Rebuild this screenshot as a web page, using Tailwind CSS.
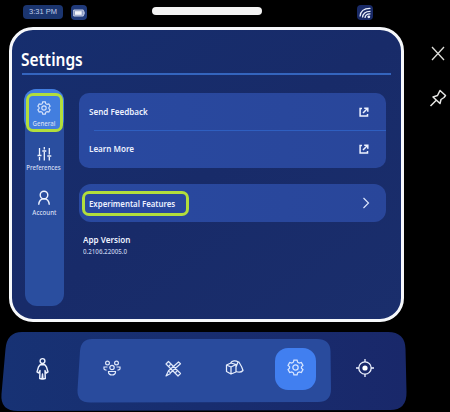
<!DOCTYPE html>
<html lang="en">
<head>
<meta charset="utf-8">
<title>Settings</title>
<script src="https://cdn.jsdelivr.net/npm/@tailwindcss/browser@4"></script>
</head>
<body class="w-[450px] h-[412px] overflow-hidden bg-black text-[#edf2ff] font-['Noto_Sans','Open_Sans',sans-serif]">
<svg class="hidden">
  <symbol id="gear" viewBox="0 0 16 16"><path d="M6.500 1h3l.5 2 1.500.9 2-.6L15 6l-1.400 1.300v1.400L15 10l-1.500 2.700-2-.6-1.500.9-.5 2h-3L6 13l-1.500-.9-2 .6L1 10l1.400-1.300V7.300L1 6l1.500-2.700 2 .6L6 3z"/><circle cx="8" cy="8" r="2.500"/></symbol>
  <symbol id="share" viewBox="0 0 10 10"><path d="M3 1.500H1.100v7.400h7.400V7M4 6l4.200-4.200M5.200 1.200h3.600v3.600"/></symbol>
</svg>
<header class="flex h-[27px]">
  <div class="ml-[23px] mt-[5px] w-10 h-[14px] rounded-[4px] bg-[#1b356f] text-[#c0cdea] text-[7.5px] leading-[14px] text-center font-medium font-['Liberation_Sans',sans-serif]">3:31 PM</div>
  <div class="ml-2 mt-[5px] w-4 h-[15px] rounded-[4px] bg-[#203a7a] flex items-center justify-center">
    <svg width="12" height="8" viewBox="0 0 12 8"><path d="M.7 1h9.600v6H.7z" fill="#8292bd" stroke="#c4cde5"/><path d="M2 2.200h6.700v3.600H2z" fill="#f2f4fb"/><path d="M11.200 2.500v3" stroke="#c4cde5"/></svg>
  </div>
  <div class="ml-[65px] mt-[7px] w-[110px] h-2 rounded-[4px] bg-[#f3f3f3]"></div>
  <div class="ml-[95px] mt-[5px] w-4 h-[15px] rounded-[4px] bg-[#192a67] flex items-center justify-center">
    <svg width="13" height="12" viewBox="0 0 13 12" fill="none" stroke="#e9eefa" stroke-width="1.250"><path d="M1 9.500C1.500 4.500 5 1.300 11.500 1.500M3.500 10.500c.3-4 3-6.300 8-6.200M6 11c.2-2.500 2-4.100 5.500-4"/><circle cx="9.800" cy="9.800" r=".8" fill="#e9eefa"/></svg>
  </div>
</header>

<main class="flex h-[305px]">
  <section class="ml-[9px] w-[395px] h-[295px] rounded-[24px] border-3 border-[#f6f8fb] bg-linear-to-br from-[#162e6e] via-[#182b69] to-[#1a2e6c] flex flex-col">
    <div class="ml-[10px] mr-[10px] h-[45px] pt-[17px] border-b-2 border-[#3465be]">
      <h1 class="-ml-px text-[17.500px] leading-[25px] font-semibold text-white origin-left scale-x-[0.885]">Settings</h1>
    </div>
    <div class="flex pt-[14px] pl-[12.500px]">
      <nav class="w-[39px] h-[217px] rounded-[12px] bg-[#2a4e9f] flex flex-col text-[6.900px] font-medium text-[#d5def3]">
        <div class="h-[42px] -mx-[0.5px] rounded-[12px] bg-[#427edf] pt-[4px]">
          <div class="mx-[1.500px] h-[39px] rounded-[7px] border-3 border-[#b2de3c] flex flex-col items-center pt-[5px]">
            <svg width="14" height="14" fill="none" stroke="#d7e3fb" stroke-width="1.300"><use href="#gear"/></svg>
            <span class="mt-[4px] leading-[9px] scale-x-[0.88]">General</span>
          </div>
        </div>
        <div class="mt-[16px] flex flex-col items-center">
          <svg width="15" height="14" viewBox="0 0 15 14" fill="none" stroke="#eff4ff" stroke-width="1.300"><path d="M2.500 1v7M2.500 10v3.500M.5 8.500h4M7.300 0v2.500M7.300 5v8.500M5.300 4h4M12.300 1v6.500M12.300 10v3.500M10.300 9h4"/></svg>
          <span class="mt-[2px] leading-[9px] whitespace-nowrap scale-x-[0.88]">Preferences</span>
        </div>
        <div class="mt-[18px] flex flex-col items-center">
          <svg width="14" height="16" viewBox="0 0 14 16" fill="none" stroke="#eff4ff" stroke-width="1.400"><circle cx="7" cy="5" r="3.800"/><path d="M1.700 14.800C2 11 3.500 8.700 7 8.700s5 2.300 5.300 6.100"/></svg>
          <span class="mt-[2px] leading-[9px] scale-x-[0.9]">Account</span>
        </div>
      </nav>
      <div class="ml-[15.500px] mt-[4px] w-[307px] flex flex-col">
        <div class="h-[75px] rounded-[10px] bg-linear-to-r from-[#2949a0] to-[#29469a] text-[9px] font-semibold">
          <div class="h-[37px] flex items-center justify-between pl-[9.500px] pr-[17px]"><span class="origin-left scale-x-[0.895] pt-px">Send Feedback</span><svg width="10" height="10" fill="none" stroke="#edf2ff" stroke-width="1.500"><use href="#share"/></svg></div>
          <div class="ml-[15px] h-px bg-[#2f5fc0]"></div>
          <div class="h-[35px] flex items-center justify-between pl-[9.500px] pr-[17px]"><span class="origin-left scale-x-[0.895] pt-px">Learn More</span><svg width="10" height="10" fill="none" stroke="#edf2ff" stroke-width="1.500"><use href="#share"/></svg></div>
        </div>
        <div class="mt-4 h-[38px] rounded-[12px] bg-linear-to-r from-[#2949a0] to-[#29469a] flex items-center justify-between pl-[3px] pr-[16px] text-[9px] font-semibold">
          <div class="w-[107px] h-[25px] rounded-[7px] border-3 border-[#b2de3c] flex items-center pl-[4px] whitespace-nowrap"><span class="origin-left scale-x-[0.87] pt-px">Experimental Features</span></div>
          <svg width="8" height="12" viewBox="0 0 8 12" fill="none" stroke="#dbe5fc" stroke-width="1.200"><path d="m1.500 1 5 5-5 5"/></svg>
        </div>
        <div class="mt-[12px] ml-1 text-[9px] leading-[12px] font-semibold origin-left scale-x-[0.9]">App Version</div>
        <div class="ml-1 mt-px text-[6.900px] leading-[10px] font-medium text-[#c3cee9] origin-left scale-x-[0.9]">0.2106.22005.0</div>
      </div>
    </div>
  </section>
  <aside class="ml-[24px] pt-[18px] w-5 flex flex-col items-center">
    <svg width="16" height="16" viewBox="0 0 16 16" fill="none" stroke="#deded9" stroke-width="1.300"><path d="m2 2 12 13M14 2 2 15"/></svg>
    <svg class="mt-[28px]" width="18" height="18" viewBox="0 0 18 18" fill="none" stroke="#e7e7e5" stroke-width="1.500" stroke-linejoin="round"><path d="m11 1.500 5.500 5-1.500 2-3 2-1 4-7-6.500 4.500-1.500zM7 11.500 1.500 17"/></svg>
  </aside>
</main>

<footer class="relative h-[80px] w-[450px]">
  <svg class="absolute inset-0" width="450" height="80">
    <defs><linearGradient id="dock"><stop stop-color="#173274"/><stop offset="1" stop-color="#19286a"/></linearGradient></defs>
    <path d="M22 0H388Q405 0 405.500 17L406.500 60Q407 78 390 78L18 79Q0 79 1.500 62L5.500 17Q7 0 22 0Z" fill="url(#dock)"/>
    <path d="M92 7H317Q330 7 330.500 19L331 57Q331 70 318 70L90 70.500Q77 70.500 77.500 58L80 19Q81 7 92 7Z" fill="#294b9d"/>
  </svg>
  <div class="relative flex h-[73px] items-center pl-[34px]">
    <svg width="16" height="24" viewBox="0 0 16 24" fill="none" stroke="#eef3ff" stroke-width="1.400" stroke-linejoin="round"><circle cx="8.500" cy="4" r="2.400"/><path d="M6.200 7.800h4.600l1.700 2.200 1.500 5-1.500 1-1.500-2.500.3 8-2.300.5-.5-5-.5 5-2.300-.5.3-8L4.500 16 3 15l1.500-5z"/></svg>
    <svg class="ml-[53px] -mt-[2px]" width="18" height="18" viewBox="0 0 18 18" fill="none" stroke="#dfe8fa" stroke-width="1.200"><circle cx="4.500" cy="4" r="1.900"/><circle cx="13.500" cy="4" r="1.900"/><circle cx="9" cy="8.500" r="2.200"/><path d="M4.500 8H1v2q.5 1 2.500 1.200M13.500 8H17v2q-.5 1-2.500 1.200M5.500 12.500h7c.3 2-1.200 3.500-3.500 3.500s-3.800-1.500-3.500-3.500z"/></svg>
    <svg class="ml-[44px] -mt-px" width="17" height="17" viewBox="0 0 17 17" fill="none" stroke="#dfe8fa" stroke-width="1.200" stroke-linejoin="round"><path d="m3.500 1.500 12 12-2.500 2.500-12-12zM13.500 2l2 1.800-10 9-2-2zM3.500 10.800 1 16l4.500-2.500M4 6l1.500-1.500M10.500 12.500 12 11"/></svg>
    <svg class="ml-[43px] -mt-[2px]" width="19" height="17" viewBox="0 0 19 17" fill="none" stroke="#e7eefc" stroke-width="1.250" stroke-linejoin="round"><path d="M1.500 6 6 4l5 1.500v7.500L6 15l-4.500-2.500zM1.500 6 6 8l5-2.500M6 8v7M5.500 4C7 1.500 11 1 13 3M13.500 2.500c1.500 2.500 3.500 5 4.500 9-1.500 1.700-4.500 2-7 1M13 3l-2 5"/></svg>
    <div class="ml-[31px] w-[41px] h-[42px] rounded-[13px] bg-[#417ff0] flex items-center justify-center pb-[2px]"><svg width="17" height="17" fill="none" stroke="#d6e4ff" stroke-width="1.200"><use href="#gear"/></svg></div>
    <svg class="ml-[40px] -mt-[2px]" width="18" height="18" viewBox="0 0 18 18" fill="none" stroke="#edf2ff" stroke-width="1.300"><circle cx="9" cy="9" r="6.200"/><circle cx="9" cy="9" r="2.600" fill="#fff" stroke="none"/><path d="M9 0v3M9 15v3M0 9h3M15 9h3"/></svg>
  </div>
</footer>
</body>
</html>
